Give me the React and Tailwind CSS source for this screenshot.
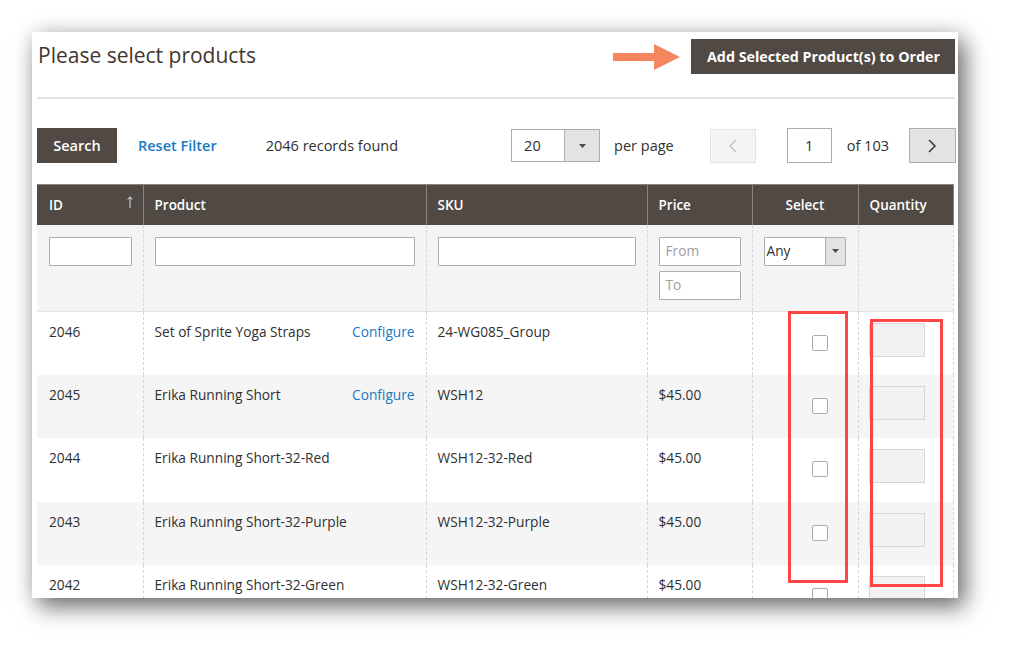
import React from "react";

const rows = [
  { id: "2046", name: "Set of Sprite Yoga Straps", configure: true, sku: "24-WG085_Group", price: "" },
  { id: "2045", name: "Erika Running Short", configure: true, sku: "WSH12", price: "$45.00" },
  { id: "2044", name: "Erika Running Short-32-Red", configure: false, sku: "WSH12-32-Red", price: "$45.00" },
  { id: "2043", name: "Erika Running Short-32-Purple", configure: false, sku: "WSH12-32-Purple", price: "$45.00" },
  { id: "2042", name: "Erika Running Short-32-Green", configure: false, sku: "WSH12-32-Green", price: "$45.00" },
];

function Caret({ className }) {
  return (
    <svg width="7" height="4" viewBox="0 0 7 4" className={className}>
      <path d="M0 0 L7 0 L3.5 4 Z" fill="#514943" />
    </svg>
  );
}

export default function App() {
  return (
    <div
      className="relative w-[1025px] h-[664px] bg-white overflow-hidden"
      style={{ fontFamily: "'Open Sans', 'Liberation Sans', sans-serif" }}
    >
      <div className="pt-[32px] pl-[32px]">
        <div className="w-[926px] h-[566px] bg-white overflow-hidden pl-[5px] pr-[3px] shadow-[7px_9px_22px_rgba(0,0,0,0.55),0_0_20px_rgba(0,0,0,0.12)]">
          {/* Header */}
          <div className="flex items-start justify-between h-[67px] border-b-2 border-[#e3e3e3]">
            <div className="pl-[1px] pt-[9px] text-[21px] leading-[28px] text-[#41362f]">Please select products</div>
            <div className="flex items-center pt-[7px]">
              <svg width="68" height="26" viewBox="0 0 68 26" className="mr-[10px]">
                <path d="M0 9 L41 9 L41 0 L67 13 L41 26 L41 17 L0 17 Z" fill="#f5865f" />
              </svg>
              <button className="h-[35px] bg-[#514943] text-white text-[14.3px] font-bold pl-[16px] pr-[15px]">
                Add Selected Product(s) to Order
              </button>
            </div>
          </div>

          {/* Toolbar */}
          <div className="flex items-center justify-between mt-[29px] -mr-[1px] h-[35px] text-[14.5px] text-[#303030]">
            <div className="flex items-center">
              <button className="w-[80px] h-[35px] bg-[#514943] text-white font-semibold">Search</button>
              <span className="ml-[21px] text-[#1979c3] font-semibold">Reset Filter</span>
              <span className="ml-[49px]">2046 records found</span>
            </div>
            <div className="flex items-center">
              <div className="flex w-[89px] h-[33px] border border-[#adadad] bg-white">
                <div className="flex-1 flex items-center pl-[12px]">20</div>
                <div className="w-[35px] flex items-center justify-center bg-[#e3e3e3] border-l border-[#adadad]">
                  <Caret />
                </div>
              </div>
              <span className="ml-[14px]">per page</span>
              <div className="ml-[36px] w-[46px] h-[34px] bg-[#f4f4f4] border border-[#e3e3e3] flex items-center justify-center">
                <svg width="9" height="14" viewBox="0 0 9 14">
                  <path d="M8 1 L2 7 L8 13" fill="none" stroke="#c2c2c2" strokeWidth="1.5" />
                </svg>
              </div>
              <div className="ml-[31px] w-[45px] h-[35px] bg-white border border-[#adadad] flex items-center justify-center">1</div>
              <span className="ml-[15px]">of 103</span>
              <div className="ml-[20px] w-[47px] h-[35px] bg-[#e3e3e3] border border-[#adadad] flex items-center justify-center">
                <svg width="9" height="14" viewBox="0 0 9 14">
                  <path d="M1 1 L7 7 L1 13" fill="none" stroke="#41362f" strokeWidth="1.5" />
                </svg>
              </div>
            </div>
          </div>

          {/* Table */}
          <table className="mt-[21px] w-[916px] table-fixed border-collapse text-[13.7px] text-[#303030]">
            <colgroup>
              <col className="w-[106px]" />
              <col className="w-[283px]" />
              <col className="w-[221px]" />
              <col className="w-[105px]" />
              <col className="w-[106px]" />
              <col className="w-[95px]" />
            </colgroup>
            <thead>
              <tr className="h-[40px] bg-[#514943] text-white text-[13.5px]">
                <th className="text-left pl-[12px] font-semibold border-t border-[#8a837f]">
                  <div className="flex items-center justify-between pr-[10px]">
                    <span>ID</span>
                    <svg width="6" height="12" viewBox="0 0 6 12" className="-mt-[5px]">
                      <path d="M3 12 L3 1 M0.8 3.5 L3 0.8 L5.2 3.5" fill="none" stroke="#d9e3ee" strokeWidth="1" />
                    </svg>
                  </div>
                </th>
                <th className="text-left pl-[11px] font-semibold border-l border-t border-[#8a837f]">Product</th>
                <th className="text-left pl-[11px] font-semibold border-l border-t border-[#8a837f]">SKU</th>
                <th className="text-left pl-[11px] font-semibold border-l border-t border-[#8a837f]">Price</th>
                <th className="text-center font-semibold border-l border-t border-[#8a837f]">Select</th>
                <th className="text-left pl-[11px] font-semibold border-l border-t border-r border-[#8a837f]">Quantity</th>
              </tr>
            </thead>
            <tbody>
              <tr className="bg-[#f4f4f4] border-b border-[#e3e3e3]">
                <td className="align-top pt-[12px] pb-[11px] pl-[12px] pr-[11px]">
                  <div className="h-[29px] bg-white border border-[#adadad] rounded-[1px]" />
                </td>
                <td className="align-top pt-[12px] pl-[11px] pr-[11px] border-l border-dashed border-[#d6d6d6]">
                  <div className="h-[29px] bg-white border border-[#adadad] rounded-[1px]" />
                </td>
                <td className="align-top pt-[12px] pl-[11px] pr-[11px] border-l border-dashed border-[#d6d6d6]">
                  <div className="h-[29px] bg-white border border-[#adadad] rounded-[1px]" />
                </td>
                <td className="align-top pt-[12px] pb-[11px] pl-[11px] pr-[11px] border-l border-dashed border-[#d6d6d6]">
                  <div className="flex flex-col gap-[5px]">
                    <div className="h-[29px] bg-white border border-[#adadad] rounded-[1px] flex items-center pl-[6px] text-[#a0a0a0]">From</div>
                    <div className="h-[29px] bg-white border border-[#adadad] rounded-[1px] flex items-center pl-[6px] text-[#a0a0a0]">To</div>
                  </div>
                </td>
                <td className="align-top pt-[12px] pl-[11px] pr-[12px] border-l border-dashed border-[#d6d6d6]">
                  <div className="flex h-[29px] bg-white border border-[#adadad] rounded-[1px]">
                    <div className="flex-1 flex items-center pl-[2px] text-[#303030]">Any</div>
                    <div className="w-[20px] flex items-center justify-center bg-[#e3e3e3] border-l border-[#adadad]">
                      <Caret />
                    </div>
                  </div>
                </td>
                <td className="border-l border-dashed border-[#d6d6d6] border-r border-r-[#d6d6d6]" />
              </tr>
              {rows.map((r, i) => (
                <tr key={r.id} className={`h-[63.5px] ${i % 2 === 1 ? "bg-[#f5f5f5]" : "bg-white"}`}>
                  <td className="align-top pt-[11px] pl-[12px] leading-[18px]">{r.id}</td>
                  <td className="align-top pt-[11px] pl-[11px] pr-[11px] leading-[18px] border-l border-dashed border-[#d6d6d6]">
                    <div className="flex justify-between">
                      <span>{r.name}</span>
                      {r.configure && <span className="text-[#1979c3]">Configure</span>}
                    </div>
                  </td>
                  <td className="align-top pt-[11px] pl-[11px] leading-[18px] border-l border-dashed border-[#d6d6d6]">{r.sku}</td>
                  <td className="align-top pt-[11px] pl-[11px] leading-[18px] border-l border-dashed border-[#d6d6d6]">{r.price}</td>
                  <td className="align-top pt-[23px] pl-[59px] border-l border-dashed border-[#d6d6d6]">
                    <div className="w-[16px] h-[16px] bg-white border border-[#adadad] rounded-[2px]" />
                  </td>
                  <td className="align-top pt-[11px] pl-[10px] border-l border-dashed border-[#d6d6d6] border-r border-r-[#d6d6d6]">
                    <div className="w-[56px] h-[34px] bg-[#f2f2f2] border border-[#d6d6d6]" />
                  </td>
                </tr>
              ))}
            </tbody>
          </table>
        </div>
      </div>

      {/* Annotation boxes */}
      <div className="absolute left-[788px] top-[311px] w-[60px] h-[272px] border-[3px] border-[#ff4646]" />
      <div className="absolute left-[870px] top-[319px] w-[73px] h-[268px] border-[3px] border-[#ff4646]" />
    </div>
  );
}
